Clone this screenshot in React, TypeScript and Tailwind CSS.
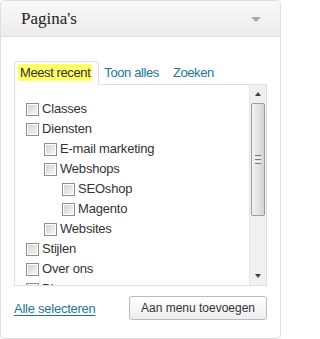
import React from "react";

type Item = { label: string; level: number };

const items: Item[] = [
  { label: "Classes", level: 0 },
  { label: "Diensten", level: 0 },
  { label: "E-mail marketing", level: 1 },
  { label: "Webshops", level: 1 },
  { label: "SEOshop", level: 2 },
  { label: "Magento", level: 2 },
  { label: "Websites", level: 1 },
  { label: "Stijlen", level: 0 },
  { label: "Over ons", level: 0 },
  { label: "Blog", level: 0 },
];

const indent = ["pl-0", "pl-[18px]", "pl-[36px]"];

function Checkbox() {
  return (
    <div className="mt-[4px] w-[13px] h-[13px] shrink-0 border border-[#8e8e8e] bg-white p-px">
      <div className="w-full h-full bg-gradient-to-br from-[#d4d4d4] to-[#f6f6f6]" />
    </div>
  );
}

export default function App() {
  return (
    <div className="w-[281px] h-[339px] bg-white font-['Liberation_Sans',Arial,sans-serif]">
      <div className="w-[281px] h-[339px] border border-[#dfdfdf] rounded-[4px] flex flex-col overflow-hidden">
        {/* header */}
        <div className="h-[36px] shrink-0 border-b border-[#dfdfdf] bg-gradient-to-b from-[#f9f9f9] to-[#ececec] flex items-center justify-between pl-[20px] pr-[19px]">
          <span className="font-['Liberation_Serif','Times_New_Roman',serif] text-[17px] text-[#222]">
            Pagina's
          </span>
          <div className="w-0 h-0 border-l-[5px] border-r-[5px] border-t-[5px] border-l-transparent border-r-transparent border-t-[#a9a9a9] mt-[1px]" />
        </div>

        {/* body */}
        <div className="flex-1 flex flex-col px-[13px] pt-[24px]">
          {/* tabs */}
          <div className="flex items-start text-[13px] tracking-[-0.4px]">
            <div className="relative z-10 -mb-px border border-b-0 border-[#dfdfdf] rounded-t-[3px] bg-white pl-[3px] pr-[6px] pt-[2px] pb-[4px]">
              <span className="block bg-[#ffff66] px-[2px] leading-[17px] text-[#333]">Meest recent</span>
            </div>
            <span className="ml-[5px] mt-[3px] leading-[17px] text-[#21759b]">Toon alles</span>
            <span className="ml-[14px] mt-[3px] leading-[17px] text-[#21759b]">Zoeken</span>
          </div>

          {/* list box */}
          <div className="h-[202px] shrink-0 border border-[#dfdfdf] flex">
            <div className="flex-1 overflow-hidden pl-[11px] pt-[14px]">
              {items.map((it) => (
                <div key={it.label} className={`flex items-start h-[20px] ${indent[it.level]}`}>
                  <Checkbox />
                  <span className="ml-[3px] text-[13px] leading-[20px] tracking-[-0.2px] text-[#333] whitespace-nowrap">
                    {it.label}
                  </span>
                </div>
              ))}
            </div>
            {/* scrollbar */}
            <div className="w-[17px] shrink-0 bg-[#f0f0f0] border-l border-[#e4e4e4] flex flex-col">
              <div className="h-[18px] shrink-0 flex items-center justify-center">
                <div className="w-0 h-0 border-l-[3px] border-r-[3px] border-b-[4px] border-l-transparent border-r-transparent border-b-[#404040]" />
              </div>
              <div className="h-[113px] shrink-0 mx-[1px] rounded-[2px] border border-[#9c9c9c] bg-gradient-to-r from-[#f2f2f2] to-[#d4d4d4] flex flex-col items-center justify-center gap-[1px]">
                <div className="w-[6px] h-[1px] bg-[#7a7a7a]" />
                <div className="w-[6px] h-[1px] bg-[#f8f8f8]" />
                <div className="w-[6px] h-[1px] bg-[#7a7a7a]" />
                <div className="w-[6px] h-[1px] bg-[#f8f8f8]" />
                <div className="w-[6px] h-[1px] bg-[#7a7a7a]" />
              </div>
              <div className="flex-1" />
              <div className="h-[18px] shrink-0 flex items-center justify-center">
                <div className="w-0 h-0 border-l-[3px] border-r-[3px] border-t-[4px] border-l-transparent border-r-transparent border-t-[#404040]" />
              </div>
            </div>
          </div>

          {/* footer */}
          <div className="mt-[10px] flex items-center justify-between">
            <a className="text-[13px] tracking-[-0.25px] text-[#21759b] underline underline-offset-[2px] mt-[2px] cursor-pointer">
              Alle selecteren
            </a>
            <button className="w-[138px] h-[24px] border border-[#bbbbbb] rounded-[3px] bg-gradient-to-b from-white to-[#eeeeee] text-[12px] text-[#333] font-['Liberation_Sans',Arial,sans-serif]">
              Aan menu toevoegen
            </button>
          </div>
        </div>
      </div>
    </div>
  );
}
